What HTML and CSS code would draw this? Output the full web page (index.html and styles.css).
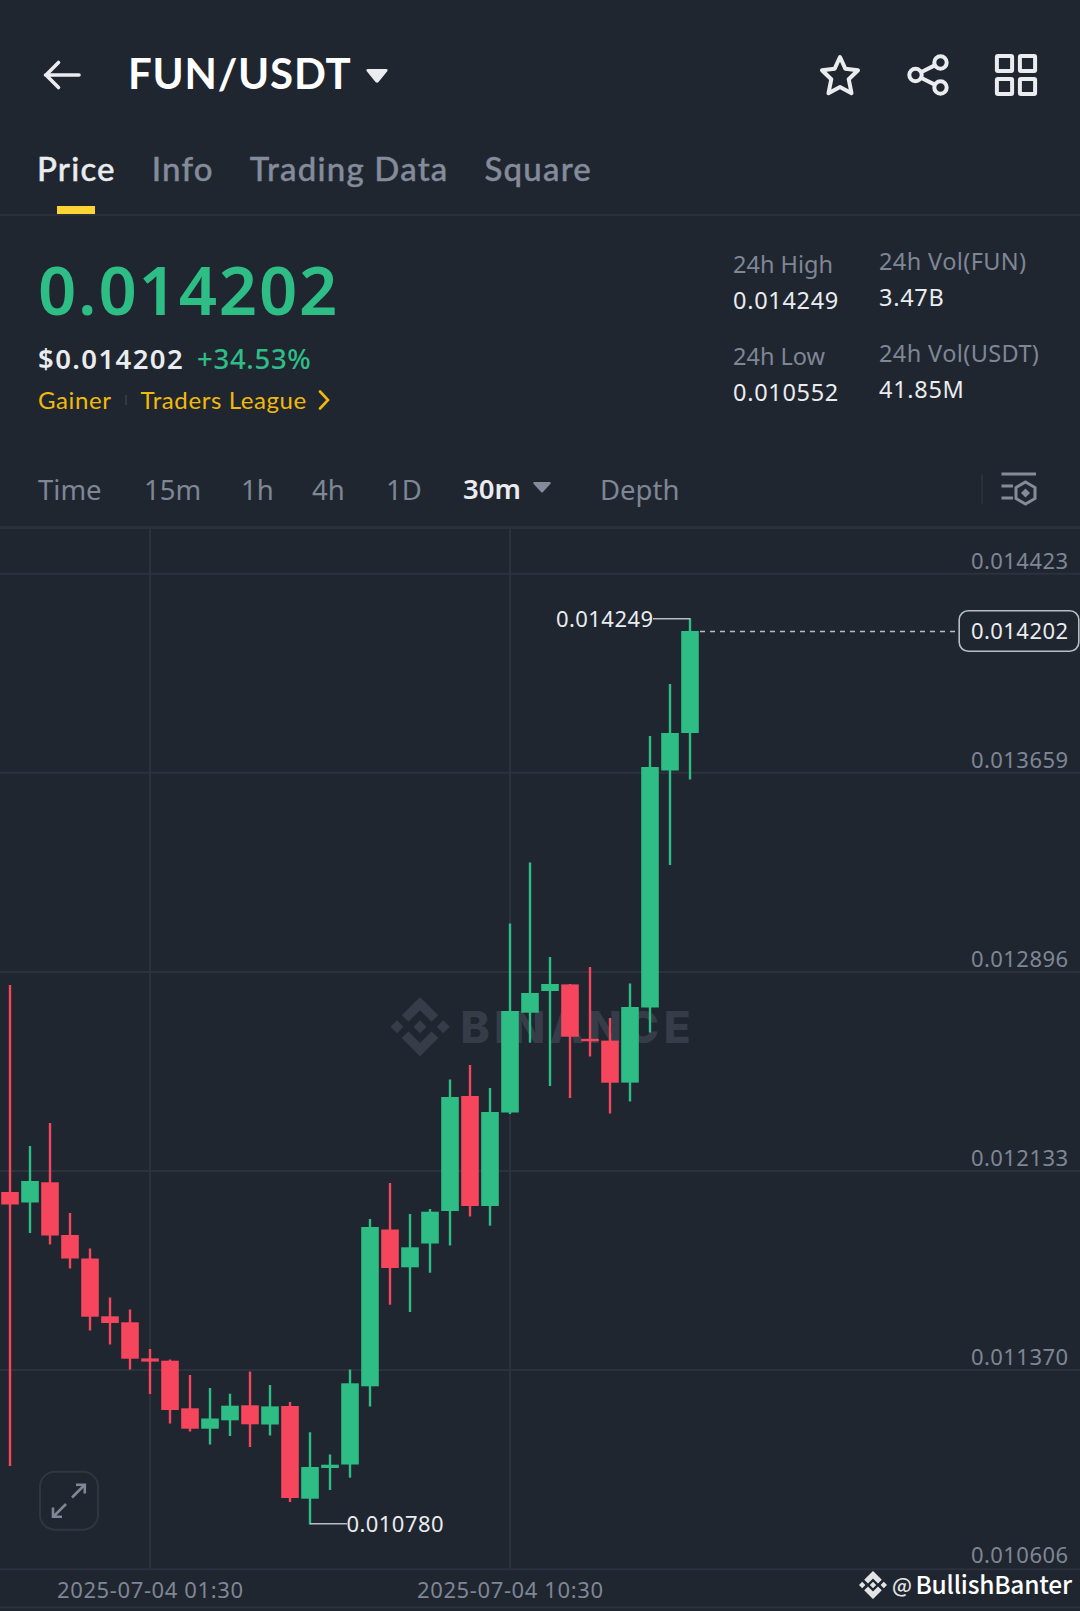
FILE: index.html
```html
<!DOCTYPE html>
<html lang="en">
	<head>
		<meta charset="utf-8">
		<title>FUN/USDT</title>
		<link rel="stylesheet" href="styles.css">
	</head>
	<body>
		<div class="header">
			<svg class="back" width="40" height="32" viewBox="0 0 40 32"><path d="M37 16H3.500M16.500 3.500L4 16L16.500 28.500"/></svg>
			<h1>FUN/USDT</h1>
			<svg class="arrow" width="22" height="14" viewBox="0 0 22 14"><path d="M1.500 0H20.500Q22.500 .5 21 2.500L12.500 13Q11 14.500 9.500 13L1 2.500Q-.5 .5 1.500 0Z"/></svg>
			<div class="tools">
				<svg width="44" height="44" viewBox="0 0 44 44"><path d="M22 4L27.300 15.700L40 17.200L30.700 26.200L33.500 40.200L22 34L10.500 40.200L13.300 26.200L4 17.200L16.700 15.700Z"/></svg>
				<svg width="44" height="44" viewBox="0 0 44 44"><circle cx="9.500" cy="22" r="6.200"/><circle cx="34.500" cy="9.500" r="6.200"/><circle cx="34.500" cy="34.500" r="6.200"/><path d="M15.500 19L28.700 12.400M15.500 25L28.700 31.600"/></svg>
				<svg width="44" height="44" viewBox="0 0 44 44"><rect x="2.900" y="2.900" width="15.200" height="15.200" rx="1"/><rect x="25.900" y="2.900" width="15.200" height="15.200" rx="1"/><rect x="2.900" y="25.900" width="15.200" height="15.200" rx="1"/><rect x="25.900" y="25.900" width="15.200" height="15.200" rx="1"/></svg>
			</div>
		</div>
		<ul class="tabs">
			<li class="current">Price</li>
			<li>Info</li>
			<li>Trading Data</li>
			<li>Square</li>
		</ul>
		<div class="ticker">
			<div class="quote">
				<p class="last">0.014202</p>
				<p class="change"><b>$0.014202</b><span>+34.53%</span></p>
				<p class="tags">
					<span>Gainer</span>
					<i></i>
					<span class="league">Traders League</span>
					<svg width="12" height="20" viewBox="0 0 12 20"><path d="M2 1.500L10 10L2 18.500"/></svg>
				</p>
			</div>
			<dl class="stats">
				<dt>24h High</dt>
				<dd>0.014249</dd>
				<dt>24h Low</dt>
				<dd>0.010552</dd>
			</dl>
			<dl class="stats vol">
				<dt>24h Vol(FUN)</dt>
				<dd>3.47B</dd>
				<dt>24h Vol(USDT)</dt>
				<dd>41.85M</dd>
			</dl>
		</div>
		<ul class="periods">
			<li class="time">Time</li>
			<li class="m15">15m</li>
			<li class="h1">1h</li>
			<li class="h4">4h</li>
			<li class="d1">1D</li>
			<li class="current">30m<svg width="18" height="11" viewBox="0 0 18 11"><path d="M1 0H17Q18.300 .5 17.300 2L10 10Q9 11 8 10L.7 2Q-.3 .5 1 0Z"/></svg></li>
			<li class="depth">Depth</li>
			<li class="setting">
				<svg width="36" height="34" viewBox="0 0 36 34"><path d="M.5 2H35M.5 14H12M.5 26H12"/><path d="M24.500 10L34 15.500V26.500L24.500 32L15 26.500V15.500Z"/><path class="dot" d="M24.500 16.500L29 21L24.500 25.500L20 21Z"/></svg>
			</li>
		</ul>
		<svg class="chart" id="chart" width="1080" height="1083" viewBox="0 528 1080 1083">
			<g class="grid" id="grid"></g>
			<g class="watermark">
				<path d="M420 997L438.200 1015.200L431.500 1021.700L420 1010.200L408.500 1021.700L401.800 1015.200ZM420 1056.500L438.200 1038L431.500 1031.500L420 1043L408.500 1031.500L401.800 1038ZM420 1020.200L426.500 1026.700L420 1033.200L413.500 1026.700ZM397 1020.200L403.500 1026.700L397 1033.200L390.500 1026.700ZM443.200 1020.200L449.700 1026.700L443.200 1033.200L436.700 1026.700Z"/>
				<text x="460.500" y="1043" textLength="230">BINANCE</text>
			</g>
			<g id="candles"></g>
			<g class="axis" id="axis"></g>
			<g class="axis dates">
				<text x="57" y="1598" textLength="186">2025-07-04 01:30</text>
				<text x="417" y="1598" textLength="186">2025-07-04 10:30</text>
			</g>
			<g class="mark">
				<path d="M653 618.700H690.500M310 1523.800H347"/>
				<path class="dash" d="M700 631.500H955"/>
				<rect x="959.200" y="610.800" width="119.600" height="40.400" rx="9"/>
				<text x="556" y="627" textLength="97">0.014249</text>
				<text x="971" y="639" textLength="97">0.014202</text>
				<text x="346.500" y="1532" textLength="97">0.010780</text>
			</g>
			<g class="full">
				<rect x="40" y="1471.700" width="58" height="58" rx="15"/>
				<path d="M72 1497.500L84.500 1485M76 1484.800H84.800V1493.600M66 1504L53.500 1516.500M53 1507.500V1516.800H62"/>
			</g>
			<g class="author">
				<path d="M873 1571L881.800 1579.800L878 1583.600L873 1578.600L868 1583.600L864.200 1579.800ZM873 1599L881.800 1590.200L878 1586.400L873 1591.400L868 1586.400L864.200 1590.200ZM873 1581.800L876.200 1585L873 1588.200L869.800 1585ZM862.200 1581.800L865.400 1585L862.200 1588.200L859 1585ZM883.800 1581.800L887 1585L883.800 1588.200L880.600 1585Z"/>
				<text class="at" x="892" y="1592.500">@</text>
				<text x="915.500" y="1594" textLength="156.500">BullishBanter</text>
			</g>
		</svg>
		<script type="text/javascript">
			var grid=document.getElementById('grid');
			var candles=document.getElementById('candles');
			var axis=document.getElementById('axis');
			//up, high, top, bottom, low
			var data=[
				[0,985,1192,1204.5,1466],
				[1,1146,1181,1202.5,1233],
				[0,1123,1182.3,1235.5,1244.5],
				[0,1213,1235,1258.5,1268.5],
				[0,1248.5,1258.5,1316.7,1330.5],
				[0,1297.5,1316.3,1323,1344.5],
				[0,1309.5,1322.3,1358.7,1369.5],
				[0,1349,1358.4,1361.6,1394],
				[0,1359.5,1360.7,1410,1423.5],
				[0,1375,1408.3,1428.7,1431.5],
				[1,1388,1418.5,1428.7,1444.5],
				[1,1393.7,1405.7,1420.3,1436],
				[0,1371.5,1405.3,1424.3,1447],
				[1,1385,1406.4,1424.5,1435.5],
				[0,1402,1406,1498,1502],
				[1,1432.3,1467,1498.7,1524.5],
				[1,1454.5,1464.7,1468,1490],
				[1,1369.5,1383.3,1464.5,1477.7],
				[1,1219,1227,1386.3,1406.5],
				[0,1183,1229.5,1268,1304.7],
				[1,1214,1247.3,1267.3,1312],
				[1,1209,1211.7,1243.5,1272.7],
				[1,1079.5,1097,1211,1245.5],
				[0,1065,1096,1206,1216.5],
				[1,1088,1112,1206,1225.7],
				[1,923.5,1011,1112.5,1114],
				[1,862.5,993,1012.7,1042.7],
				[1,957,984,991,1086],
				[0,984,984.4,1036.7,1098],
				[0,967,1038.8,1041.3,1056.5],
				[0,1018,1040.6,1082.7,1113.5],
				[1,983.5,1007,1082.6,1101.5],
				[1,736,767,1007.5,1032.5],
				[1,684,733,770.5,865],
				[1,618.5,631,733,779.5]
			];
			var prices=['0.014423','0.013659','0.012896','0.012133','0.011370','0.010606'];
			var html='';
			for (var i = 0; i < data.length; i++) {
				var d=data[i];
				var x=10+i*20;
				html+='<g class="'+(d[0]?'up':'down')+'">';
				html+='<rect x="'+(x-1.2)+'" y="'+d[1]+'" width="2.4" height="'+(d[4]-d[1])+'"/>';
				html+='<rect x="'+(x-8.8)+'" y="'+d[2]+'" width="17.6" height="'+(d[3]-d[2])+'"/></g>';
			}
			candles.innerHTML=html;
			//horizontal lines and price labels
			var lines='M0 528H1080M150 528V1569M510 528V1569M0 1607.5H1080';
			var labels='';
			for (var i = 0; i < prices.length; i++) {
				var y=573.7+i*199.1;
				lines+='M0 '+y+'H1080';
				labels+='<text x="971" y="'+(i==5?1563:y-5)+'" textLength="97">'+prices[i]+'</text>';
			}
			grid.innerHTML='<path d="'+lines+'"/>';
			axis.innerHTML=labels;
		</script>
	</body>
</html>
```
FILE: styles.css
```css
*{margin: 0;padding: 0;list-style: none;box-sizing: border-box;}
body{
	width: 1080px;
	height: 1611px;
	overflow: hidden;
	background: #202630;
	color: #eaecef;
	font-family: "Noto Sans","Open Sans",sans-serif;
}
svg{display: block;flex: none;fill: none;}
.header{
	display: flex;
	align-items: center;
	height: 109px;
	padding: 40px 42px 0 42px;
}
.header .back{stroke: #eaecef;stroke-width: 3.6;stroke-linecap: round;stroke-linejoin: round;}
.header h1{
	margin: -3px 0 0 46px;
	font: 700 42px/60px Lato,sans-serif;
	letter-spacing: .8px;
	color: #fff;
}
.header .arrow{margin: 2px 0 0 14px;fill: #eaecef;}
.tools{
	display: flex;
	gap: 44px;
	margin-left: auto;
	stroke: #eaecef;
	stroke-width: 4;
	stroke-linejoin: round;
}
.tabs{
	display: flex;
	gap: 36px;
	height: 107px;
	padding: 36px 37px 0;
	border-bottom: 2px solid #29303b;
	font: 500 33px/46px Lato,sans-serif;
	letter-spacing: 1.2px;
	color: #848b9a;
	-webkit-text-stroke: .4px;
}
.tabs .current{position: relative;color: #eaecef;}
.tabs .current:after{
	content: "";
	position: absolute;
	left: 20px;
	bottom: 0;
	width: 38px;
	height: 8px;
	background: #fcd535;
}
.ticker{display: flex;height: 220px;padding-left: 38px;}
.quote{width: 695px;padding-top: 27px;}
.last{
	font-size: 67px;
	line-height: 92px;
	font-weight: 600;
	letter-spacing: 1.8px;
	color: #2ebd85;
}
.change{display: flex;gap: 13px;margin-top: 3px;font-size: 27.5px;line-height: 42px;}
.change b{font-weight: 600;letter-spacing: 1.4px;}
.change span{font-weight: 500;letter-spacing: .7px;color: #2ebd85;}
.tags{
	display: flex;
	align-items: center;
	font: 400 24px/40px Lato,sans-serif;
	letter-spacing: .6px;
	color: #f0b90b;
}
.tags i{width: 2px;height: 10px;margin: 0 14px 0 13px;background: #333b47;}
.tags svg{margin-left: 11px;stroke: #f0b90b;stroke-width: 2.6;stroke-linecap: round;}
.stats{width: 146px;padding-top: 30px;font-size: 23.5px;line-height: 36px;white-space: nowrap;}
.stats dt{color: #7f8695;}
.stats dd{margin-bottom: 20px;letter-spacing: .7px;}
.vol{padding-top: 27px;}
.vol dt{letter-spacing: .4px;}
.periods{
	display: flex;
	height: 92px;
	padding: 33px 43px 0 38px;
	border-bottom: 2px solid #29303b;
	font-size: 27.5px;
	line-height: 42px;
	color: #7f8695;
}
.periods .time{width: 106px;}
.periods .m15{width: 97px;}
.periods .h1{width: 71px;}
.periods .h4{width: 74px;}
.periods .d1{width: 77px;}
.periods .current{display: flex;width: 137px;margin-top: -1px;font-weight: 600;color: #eaecef;}
.periods .current svg{margin: 14px 0 0 12px;fill: #848b9a;}
.periods .setting{
	height: 30px;
	margin: 5px 0 0 auto;
	padding-left: 18px;
	border-left: 2px solid #29303b;
}
.setting svg{margin-top: -2px;stroke: #848b9a;stroke-width: 3;}
.setting .dot{fill: #848b9a;stroke: none;}
.chart text{font-size: 22px;}
.grid{stroke: #2b313d;stroke-width: 2;}
.watermark{fill: #373d48;}
.chart .watermark text{font: 800 44px Inter,sans-serif;}
.up{fill: #2ebd85;}
.down{fill: #f6465d;}
.axis{fill: #7f8695;}
.mark{stroke: #b8bcc4;stroke-width: 1.6;}
.mark .dash{stroke-dasharray: 5 5;}
.mark text{fill: #eaecef;stroke: none;}
.full{stroke: #7f8695;stroke-width: 2.6;}
.full rect{stroke: #2f3642;stroke-width: 2;}
.author{fill: #e3e4e6;}
.chart .author text{font: 500 24.5px "Noto Sans CJK SC",sans-serif;fill: #fff;}
.chart .author .at{font-size: 20.5px;fill: #e3e4e6;}
```
